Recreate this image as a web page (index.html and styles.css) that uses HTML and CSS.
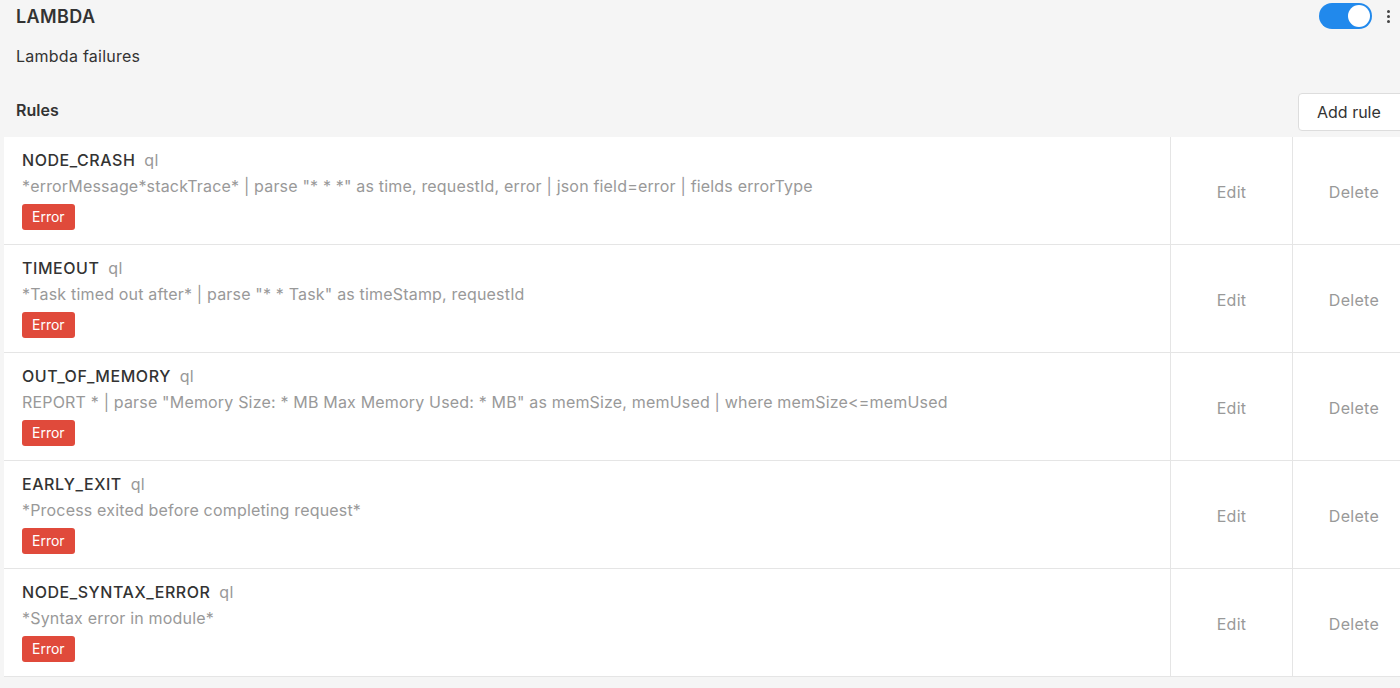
FILE: index.html
```html
<!DOCTYPE html>
<html>
<head>
<meta charset="utf-8">
<link rel="stylesheet" href="styles.css">
</head>
<body>
<div class="page">
  <div class="header">
    <div class="title">LAMBDA</div>
    <div class="controls">
      <span class="toggle"><span class="knob"></span></span>
      <span class="more"><i></i><i></i><i></i></span>
    </div>
  </div>
  <div class="desc">Lambda failures</div>
  <div class="rules-bar">
    <div class="rules-title">Rules</div>
    <button class="add-btn">Add rule</button>
  </div>
  <div class="table">
    <div class="row">
      <div class="cell-main">
        <div class="name">NODE_CRASH <span class="type">ql</span></div>
        <div class="query">*errorMessage*stackTrace* | parse "* * *" as time, requestId, error | json field=error | fields errorType</div>
        <span class="badge">Error</span>
      </div>
      <div class="cell-act">Edit</div>
      <div class="cell-act">Delete</div>
    </div>
    <div class="row">
      <div class="cell-main">
        <div class="name">TIMEOUT <span class="type">ql</span></div>
        <div class="query">*Task timed out after* | parse "* * Task" as timeStamp, requestId</div>
        <span class="badge">Error</span>
      </div>
      <div class="cell-act">Edit</div>
      <div class="cell-act">Delete</div>
    </div>
    <div class="row">
      <div class="cell-main">
        <div class="name">OUT_OF_MEMORY <span class="type">ql</span></div>
        <div class="query">REPORT * | parse "Memory Size: * MB Max Memory Used: * MB" as memSize, memUsed | where memSize&lt;=memUsed</div>
        <span class="badge">Error</span>
      </div>
      <div class="cell-act">Edit</div>
      <div class="cell-act">Delete</div>
    </div>
    <div class="row">
      <div class="cell-main">
        <div class="name">EARLY_EXIT <span class="type">ql</span></div>
        <div class="query">*Process exited before completing request*</div>
        <span class="badge">Error</span>
      </div>
      <div class="cell-act">Edit</div>
      <div class="cell-act">Delete</div>
    </div>
    <div class="row">
      <div class="cell-main">
        <div class="name">NODE_SYNTAX_ERROR <span class="type">ql</span></div>
        <div class="query">*Syntax error in module*</div>
        <span class="badge">Error</span>
      </div>
      <div class="cell-act">Edit</div>
      <div class="cell-act">Delete</div>
    </div>
  </div>
</div>
</body>
</html>
```

FILE: styles.css
```css
* { box-sizing: border-box; }
html, body {
  margin: 0;
  padding: 0;
  background: #f5f5f5;
  font-family: Inter, "Noto Sans", "Liberation Sans", sans-serif;
  color: #333;
  overflow: hidden;
}
.page {
  width: 1400px;
  height: 688px;
  padding-left: 4px;
  overflow: hidden;
}
.header {
  display: flex;
  justify-content: space-between;
  align-items: flex-start;
  height: 36px;
  padding-left: 12px;
}
.title {
  font-size: 18px;
  font-weight: 600;
  line-height: 20px;
  padding-top: 7px;
  letter-spacing: 0.4px;
}
.controls {
  display: flex;
  align-items: center;
  gap: 15px;
  padding-top: 3px;
  padding-right: 10px;
}
.toggle {
  width: 53px;
  height: 26px;
  border-radius: 13px;
  background: #2189ec;
  display: flex;
  align-items: center;
  justify-content: flex-end;
  padding-right: 2px;
}
.knob {
  width: 22px;
  height: 22px;
  border-radius: 50%;
  background: #fff;
}
.more {
  display: flex;
  flex-direction: column;
  gap: 2px;
}
.more i {
  width: 3px;
  height: 3px;
  border-radius: 50%;
  background: #444;
}
.desc {
  font-size: 16px;
  line-height: 20px;
  padding-left: 12px;
  padding-top: 10px;
  height: 50px;
  letter-spacing: 0.25px;
}
.rules-bar {
  display: flex;
  justify-content: space-between;
  align-items: center;
  height: 51px;
  padding-left: 12px;
}
.rules-title {
  font-size: 16px;
  font-weight: 600;
  margin-top: -3px;
}
.add-btn {
  font-family: inherit;
  font-size: 16px;
  color: #333;
  background: #fff;
  border: 1px solid #ddd;
  border-radius: 4px;
  height: 38px;
  width: 110px;
  padding: 0 0 0 18px;
  text-align: left;
  margin-right: -8px;
}
.table {
  background: #fff;
  width: 1412px;
}
.row {
  display: flex;
  height: 108px;
  border-bottom: 1px solid #e5e5e5;
}
.cell-main {
  width: 1167px;
  flex: none;
  border-right: 1px solid #e5e5e5;
  padding: 13px 0 0 18px;
}
.name {
  font-size: 16px;
  font-weight: 500;
  line-height: 20px;
  color: #333;
  letter-spacing: 0.55px;
}
.type {
  font-weight: 400;
  color: #999;
  margin-left: 4px;
  letter-spacing: 0.3px;
}
.query {
  font-size: 16px;
  line-height: 20px;
  color: #999;
  margin-top: 6px;
  letter-spacing: 0.18px;
}
.badge {
  display: inline-block;
  margin-top: 8px;
  background: #e04a3b;
  color: #fff;
  font-size: 14px;
  line-height: 26px;
  height: 26px;
  padding: 0 10px;
  border-radius: 3px;
}
.cell-act {
  display: flex;
  align-items: center;
  justify-content: center;
  width: 122px;
  flex: none;
  font-size: 16px;
  color: #999;
  border-right: 1px solid #e5e5e5;
  letter-spacing: 0.3px;
  padding-top: 2px;
}
.cell-act:last-child {
  border-right: none;
}
```
